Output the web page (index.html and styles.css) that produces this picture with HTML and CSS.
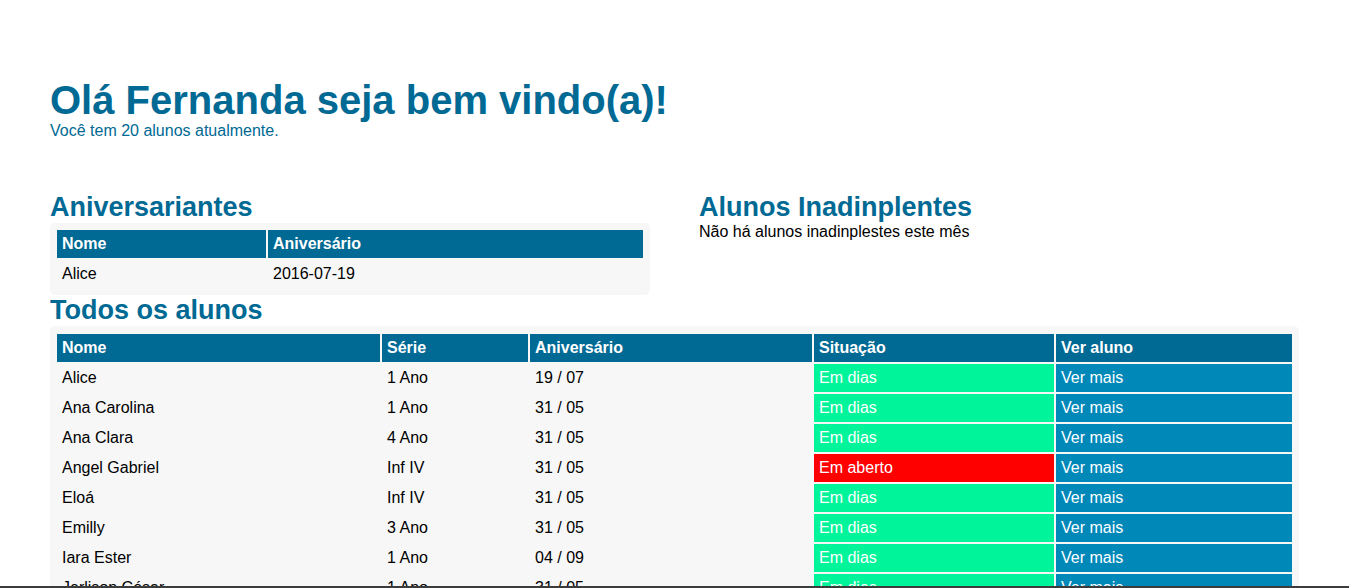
FILE: index.html
```html
<!DOCTYPE html>
<html lang="pt-BR">
<head>
<meta charset="utf-8">
<title>Painel</title>
<link rel="stylesheet" href="styles.css">
</head>
<body>
<main class="page">
  <header class="welcome">
    <h1 class="welcome-title">Olá Fernanda seja bem vindo(a)!</h1>
    <p class="welcome-sub">Você tem 20 alunos atualmente.</p>
  </header>

  <div class="top-grid">
    <section>
      <h2 class="section-title">Aniversariantes</h2>
      <div class="table-box">
        <table class="data">
          <thead>
            <tr><th class="c-bnome">Nome</th><th class="c-baniv">Aniversário</th></tr>
          </thead>
          <tbody>
            <tr><td>Alice</td><td>2016-07-19</td></tr>
          </tbody>
        </table>
      </div>
    </section>
    <section>
      <h2 class="section-title">Alunos Inadinplentes</h2>
      <p class="note">Não há alunos inadinplestes este mês</p>
    </section>
  </div>

  <section class="all-students">
    <h2 class="section-title">Todos os alunos</h2>
    <div class="table-box tall">
      <table class="data">
        <thead>
          <tr>
            <th class="c-nome">Nome</th>
            <th class="c-serie">Série</th>
            <th class="c-aniv">Aniversário</th>
            <th class="c-sit">Situação</th>
            <th class="c-ver">Ver aluno</th>
          </tr>
        </thead>
        <tbody>
          <tr><td>Alice</td><td>1 Ano</td><td>19 / 07</td><td class="ok">Em dias</td><td class="more">Ver mais</td></tr>
          <tr><td>Ana Carolina</td><td>1 Ano</td><td>31 / 05</td><td class="ok">Em dias</td><td class="more">Ver mais</td></tr>
          <tr><td>Ana Clara</td><td>4 Ano</td><td>31 / 05</td><td class="ok">Em dias</td><td class="more">Ver mais</td></tr>
          <tr><td>Angel Gabriel</td><td>Inf IV</td><td>31 / 05</td><td class="late">Em aberto</td><td class="more">Ver mais</td></tr>
          <tr><td>Eloá</td><td>Inf IV</td><td>31 / 05</td><td class="ok">Em dias</td><td class="more">Ver mais</td></tr>
          <tr><td>Emilly</td><td>3 Ano</td><td>31 / 05</td><td class="ok">Em dias</td><td class="more">Ver mais</td></tr>
          <tr><td>Iara Ester</td><td>1 Ano</td><td>04 / 09</td><td class="ok">Em dias</td><td class="more">Ver mais</td></tr>
          <tr><td>Jerlison César</td><td>1 Ano</td><td>31 / 05</td><td class="ok">Em dias</td><td class="more">Ver mais</td></tr>
        </tbody>
      </table>
    </div>
  </section>
</main>
<div class="bottom-edge"></div>
</body>
</html>
```

FILE: styles.css
```css
html, body {
  margin: 0;
  padding: 0;
  background: #ffffff;
}

body {
  font-family: "Liberation Sans", Arial, sans-serif;
  font-size: 16px;
  color: #000;
}

.page {
  padding: 0 50px 40px 50px;
}

.welcome {
  padding-top: 79px;
}

.welcome-title {
  margin: 0;
  font-size: 40px;
  line-height: 43px;
  font-weight: bold;
  color: #006994;
}

.welcome-sub {
  margin: 0;
  font-size: 16px;
  line-height: 18px;
  color: #006994;
}

.top-grid {
  display: grid;
  grid-template-columns: 600px 1fr;
  column-gap: 49px;
  margin-top: 52px;
}

.section-title {
  margin: 0;
  font-size: 27px;
  line-height: 31px;
  font-weight: bold;
  color: #006994;
}

.note {
  margin: 0;
  font-size: 16px;
  line-height: 18px;
}

.table-box {
  background: #f7f7f7;
  border-radius: 5px;
  padding: 5px;
}

.table-box.tall {
  padding-top: 6px;
}

.data {
  width: 100%;
  table-layout: fixed;
  border-spacing: 2px;
  border-collapse: separate;
}

.data th,
.data td {
  height: 28px;
  padding: 0 5px;
  box-sizing: border-box;
  text-align: left;
  font-size: 16px;
  line-height: 18px;
  vertical-align: middle;
  white-space: nowrap;
  overflow: hidden;
}

.data th {
  background: #006994;
  color: #ffffff;
  font-weight: bold;
}

.c-bnome { width: 209px; }
.c-baniv { width: 375px; }
.c-nome { width: 323px; }
.c-serie { width: 146px; }
.c-aniv { width: 282px; }
.c-sit { width: 240px; }
.c-ver { width: 236px; }

.data td.ok {
  background: #00f59b;
  color: #ffffff;
}

.data td.late {
  background: #ff0000;
  color: #ffffff;
}

.data td.more {
  background: #0088b9;
  color: #ffffff;
}

.bottom-edge {
  position: fixed;
  left: 0;
  right: 0;
  bottom: 0;
  height: 2px;
  background: #3c3c3c;
}
```
